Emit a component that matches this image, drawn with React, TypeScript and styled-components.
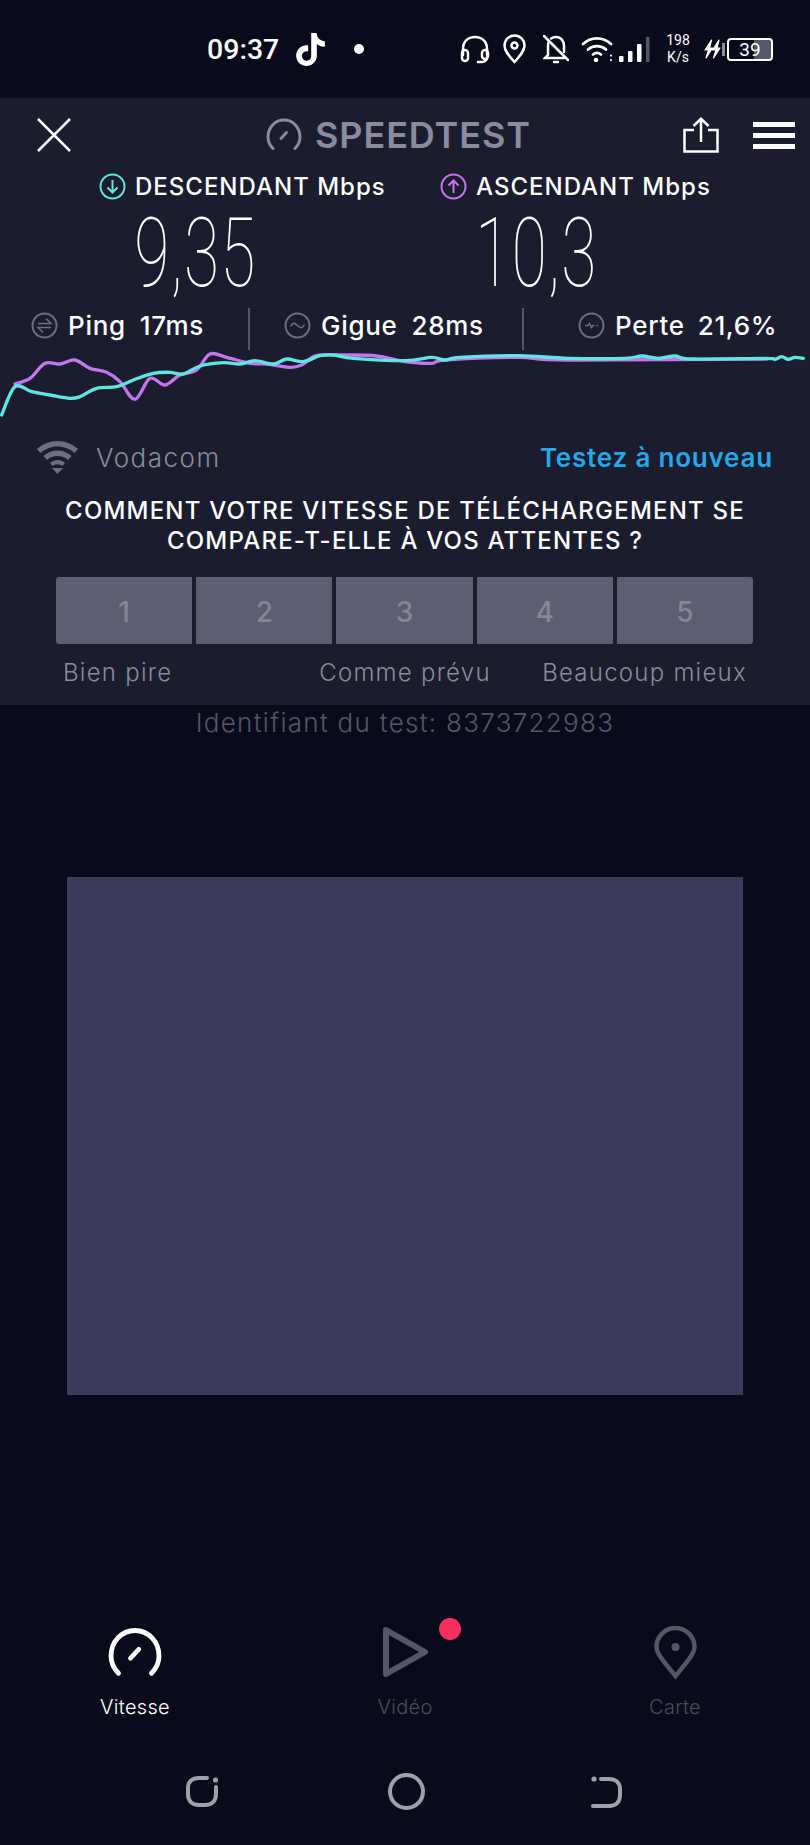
import styled, { createGlobalStyle } from 'styled-components'
import { SiTiktok } from 'react-icons/si'

const GlobalStyle = createGlobalStyle`
    html, body {
        margin: 0;
        padding: 0;
        background: #0a0b1a;
    }
    * {
        box-sizing: border-box;
    }
`

const Page = styled.div`
    width: 810px;
    height: 1845px;
    overflow: hidden;
    background: #0a0b1a;
    color: #fff;
    font-family: Inter, 'Open Sans', sans-serif;
`

const StatusBar = styled.div`
    height: 98px;
    padding: 0 37px 0 207px;
    display: flex;
    align-items: center;
    font-family: Roboto, sans-serif;
`
const Clock = styled.span`
    font-size: 28.5px;
    font-weight: 500;
    width: 76px;
`
const TikTokSlot = styled.span`
    margin-left: 11px;
    display: flex;
    font-size: 33px;
`
const StatusDot = styled.span`
    width: 10px;
    height: 10px;
    border-radius: 50%;
    background: #fff;
    margin-left: 27px;
`
const StatusIcons = styled.div`
    margin-left: auto;
    display: flex;
    align-items: center;
`
const StatusSlot = styled.span<{ $left: number }>`
    margin-left: ${(p) => p.$left}px;
    display: flex;
`
const NetSpeed = styled.span`
    margin-left: 16px;
    width: 24px;
    font-size: 14px;
    line-height: 17px;
    font-weight: 400;
    text-align: center;
`
const Battery = styled.span`
    width: 46px;
    height: 23px;
    margin-left: 2px;
    border: 2px solid #fff;
    border-radius: 4px;
    font-size: 19px;
    line-height: 19px;
    text-align: center;
    background: linear-gradient(90deg, transparent 60%, #55566a 60%);
`
const BatteryCap = styled.span`
    width: 3px;
    height: 13px;
    margin-left: 1px;
    background: #8d8e9c;
`

const Panel = styled.section`
    height: 607px;
    background: #1b1c2e;
`
const Toolbar = styled.div`
    height: 70px;
    padding: 4px 15px 0 37px;
    display: flex;
    align-items: center;
`
const Brand = styled.div`
    margin-left: 195px;
    display: flex;
    align-items: center;
    gap: 13px;
    color: #8a8b9e;
    font-size: 36px;
    font-weight: 600;
    letter-spacing: 0.9px;
`
const ToolbarActions = styled.div`
    margin-left: auto;
    display: flex;
    align-items: center;
    gap: 34px;
`
const Burger = styled.div`
    width: 42px;
    height: 27px;
    display: flex;
    flex-direction: column;
    justify-content: space-between;
    span {
        height: 5px;
        background: #fff;
    }
`

const SpeedLabels = styled.div`
    margin-top: 4px;
    height: 26px;
    padding-left: 99px;
    display: grid;
    grid-template-columns: 341px 1fr;
`
const SpeedLabel = styled.div`
    display: flex;
    align-items: center;
    gap: 9px;
    font-size: 24px;
    font-weight: 500;
    letter-spacing: 1px;
    white-space: nowrap;
`
const SpeedValues = styled.div`
    height: 110px;
    padding-left: 25px;
    display: grid;
    grid-template-columns: 341px 341px;
`
const SpeedValue = styled.div`
    text-align: center;
    font-family: Roboto, sans-serif;
    font-size: 97px;
    font-weight: 100;
    line-height: 110px;
    letter-spacing: 2px;
    transform: scaleX(0.66);
    white-space: nowrap;
`

const Stats = styled.div`
    height: 42px;
    padding-left: 31px;
    display: grid;
    grid-template-columns: 217px 274px 1fr;
`
const Stat = styled.div<{ $inset: number; $divided?: boolean }>`
    padding: 0 0 7px ${(p) => p.$inset}px;
    display: flex;
    align-items: center;
    font-size: 26px;
    font-weight: 500;
    letter-spacing: 0.7px;
    white-space: nowrap;
    border-left: ${(p) => (p.$divided ? '2px solid #55566a' : 'none')};
`
const StatName = styled.span<{ $gap: number }>`
    margin-left: 10px;
    margin-right: ${(p) => p.$gap}px;
`

const Chart = styled.svg`
    display: block;
    width: 810px;
    height: 70px;
`

const NetworkRow = styled.div`
    height: 76px;
    padding: 0 37px 2px;
    display: flex;
    align-items: center;
`
const Carrier = styled.span`
    margin-left: 18px;
    font-size: 26px;
    font-weight: 300;
    letter-spacing: 1.5px;
    color: #8a8b9e;
`
const Retry = styled.span`
    margin-left: auto;
    font-size: 26px;
    font-weight: 600;
    letter-spacing: 0.8px;
    color: #26a9e8;
`

const Question = styled.h2`
    margin: 0;
    text-align: center;
    font-size: 24px;
    line-height: 30px;
    font-weight: 500;
    letter-spacing: 1.2px;
`
const Ratings = styled.div`
    margin: 21px 57px 0 56px;
    height: 67px;
    display: grid;
    grid-template-columns: repeat(5, 1fr);
    gap: 4px;
`
const Rating = styled.div<{ $edge?: 'left' | 'right' }>`
    padding-top: 3px;
    background: #5d5e72;
    color: #85869a;
    display: flex;
    align-items: center;
    justify-content: center;
    font-size: 28px;
    font-weight: 500;
    border-radius: ${(p) =>
        p.$edge === 'left' ? '3px 0 0 3px' : p.$edge === 'right' ? '0 3px 3px 0' : '0'};
`
const Scale = styled.div`
    padding: 14px 63px 0;
    display: grid;
    grid-template-columns: 1fr auto 1fr;
    color: #8a8b9e;
    font-size: 24px;
    font-weight: 300;
    letter-spacing: 1.25px;
    white-space: nowrap;
`
const ScaleEnd = styled.span`
    justify-self: end;
`

const TestId = styled.div`
    height: 36px;
    text-align: center;
    line-height: 36px;
    font-size: 26px;
    font-weight: 300;
    letter-spacing: 1.3px;
    color: #55566a;
`
const AdSlot = styled.div`
    width: 676px;
    height: 518px;
    margin: 136px auto 0;
    background: #3b3a58;
`

const Tabs = styled.nav`
    padding-top: 231px;
    display: grid;
    grid-template-columns: 270px 270px 270px;
`
const Tab = styled.div<{ $active?: boolean }>`
    height: 93px;
    display: flex;
    flex-direction: column;
    align-items: center;
    justify-content: space-between;
    font-size: 20px;
    font-weight: 300;
    letter-spacing: 0.3px;
    color: ${(p) => (p.$active ? '#fff' : '#4a4b5e')};
`
const TabIcon = styled.div`
    position: relative;
    height: 58px;
    display: flex;
    align-items: flex-start;
`
const Badge = styled.span`
    position: absolute;
    top: -8px;
    left: 57px;
    width: 22px;
    height: 22px;
    border-radius: 50%;
    background: #f7315f;
`

const SystemNav = styled.div`
    margin-top: 54px;
    padding: 0 187px 0 185px;
    display: flex;
    align-items: center;
    justify-content: space-between;
`

const CloseIcon = () => (
    <svg width="34" height="34" viewBox="0 0 34 34" fill="none" stroke="#fff" strokeWidth="2.5">
        <path d="M1 1l32 32M33 1L1 33" />
    </svg>
)

const Gauge = ({ size, color, stroke }: { size: number; color: string; stroke: number }) => (
    <svg width={size} height={size} viewBox="0 0 36 36" fill="none" stroke={color} strokeWidth={stroke} strokeLinecap="round">
        <path d="M7 31.5C3.5 28 2 24 2 20 2 10.500 9 3 18 3s16 7.500 16 17c0 4-1.500 8-5 11.500" />
        <path d="M15 21.500l5.500-6" />
    </svg>
)

const ShareIcon = () => (
    <svg width="36" height="36" viewBox="0 0 36 36" fill="none" stroke="#fff" strokeWidth="2.5">
        <path d="M11 13H1.500v21.500h33V13H25" />
        <path d="M18 25V2M10.500 9L18 1.800 25.500 9" />
    </svg>
)

const RoundArrow = ({ color, up }: { color: string; up?: boolean }) => (
    <svg width="27" height="27" viewBox="0 0 27 27" fill="none" stroke={color} strokeWidth="2">
        <circle cx="13.500" cy="13.500" r="12" />
        <path d={up ? 'M13.500 20V7.500M8.500 12.500l5-5 5 5' : 'M13.500 7v12.500M8.500 14.500l5 5 5-5'} />
    </svg>
)

const StatIcon = ({ d }: { d: string }) => (
    <svg width="27" height="27" viewBox="0 0 27 27" fill="none" stroke="#6d6e82" strokeWidth="2">
        <circle cx="13.500" cy="13.500" r="12" />
        <path d={d} strokeWidth="1.600" />
    </svg>
)

const WifiMark = () => (
    <svg width="41" height="33" viewBox="0 0 41 33" fill="#6d6e82">
        <path d="M20.500 0C12.500 0 5.500 3 0 8l3.500 4C8 8 14 5.500 20.500 5.500S33 8 37.500 12l3.500-4C35.500 3 28.500 0 20.500 0z" />
        <path d="M20.500 9.500c-5.500 0-10.500 2-14 5.500l3.500 4c2.700-2.700 6.500-4 10.500-4s7.800 1.300 10.500 4l3.500-4c-3.500-3.500-8.500-5.500-14-5.500z" />
        <path d="M20.500 19c-3 0-5.500 1-7.500 3l2.700 3c1.200-1 3-1.700 4.800-1.700s3.600.7 4.800 1.700l2.700-3c-2-2-4.500-3-7.500-3z" />
        <path d="M15 27h11l-5.500 6z" />
    </svg>
)

const Headset = () => (
    <svg width="30" height="29" viewBox="0 0 30 29" fill="none" stroke="#fff" strokeWidth="2.500" strokeLinecap="round">
        <path d="M3 20V14C3 6.500 8 2 15 2s12 4.500 12 12v6" />
        <rect x="2" y="15" width="6" height="11" rx="3" />
        <rect x="22" y="15" width="6" height="9" rx="3" />
        <path d="M27 22c0 3-2 5-5 5h-4" />
    </svg>
)

const PinStatus = () => (
    <svg width="23" height="30" viewBox="0 0 23 30" fill="none" stroke="#fff" strokeWidth="2.500">
        <path d="M11.500 28C6 22 1.500 17 1.500 11.500a10 10 0 0 1 20 0C21.500 17 17 22 11.500 28z" />
        <circle cx="11.500" cy="11.500" r="3" />
    </svg>
)

const BellOff = () => (
    <svg width="26" height="29" viewBox="0 0 26 29" fill="none" stroke="#fff" strokeWidth="2.500" strokeLinecap="round">
        <path d="M1 1l24 24" />
        <path d="M6 6.500C5 8 5 9.500 5 11v9l-3 3h19" />
        <path d="M8 3.500C9.500 2.500 11 2 13 2c5 0 8 4 8 9v6" />
        <path d="M11 27h4" />
    </svg>
)

const WifiStatus = () => (
    <svg width="32" height="26" viewBox="0 0 32 26" fill="none" stroke="#fff" strokeWidth="2.800" strokeLinecap="round">
        <path d="M2 8c8-7.500 20-7.500 28 0" />
        <path d="M7 13.500c5-4.500 13-4.500 18 0" />
        <path d="M12 18.500c2.500-2 5.500-2 8 0" />
        <circle cx="15" cy="24" r="2.200" fill="#fff" stroke="none" />
        <path d="M30 19.500v.100M30 24v.100" strokeWidth="2.200" />
    </svg>
)

const SignalBars = () => (
    <svg width="32" height="25" viewBox="0 0 32 25" fill="#fff">
        <rect x="1" y="19" width="4.500" height="6" rx="1" />
        <rect x="10" y="14" width="4.500" height="11" rx="1" />
        <rect x="19" y="7" width="4.500" height="18" rx="1" />
        <rect x="28" y="0" width="3.500" height="25" fill="#55566a" />
    </svg>
)

const BoltPair = () => (
    <svg width="17" height="20" viewBox="0 0 17 20" fill="#fff" stroke="#fff" strokeWidth="1.2" strokeLinejoin="round">
        <path d="M7.500 1L1 11h3.500L2 19l6.500-10H5.500zM15 1L8.500 11H12L9.500 19 16 9h-3z" />
    </svg>
)

const PlayTab = () => (
    <svg width="47" height="52" viewBox="0 0 47 52" fill="none" stroke="#55566a" strokeWidth="6" strokeLinejoin="round">
        <path d="M4 4l39 22L4 48z" />
    </svg>
)

const PinTab = () => (
    <svg width="43" height="55" viewBox="0 0 43 55" fill="none" stroke="#55566a" strokeWidth="4.500">
        <path d="M21.500 50C11 37 2.500 28 2.500 21a19 19 0 0 1 38 0c0 7-8.500 16-19 29z" />
        <circle cx="21.500" cy="21" r="4" fill="#55566a" stroke="none" />
    </svg>
)

const RecentsKey = () => (
    <svg width="36" height="33" viewBox="0 0 36 33" fill="none" stroke="#a0a0a8" strokeWidth="4" strokeLinecap="round">
        <path d="M22 3h-8C7 3 3 7 3 13v6c0 7 4 11 11 11h6c7 0 11-4 11-11v-7" />
        <circle cx="30.500" cy="5" r="2.600" fill="#a0a0a8" stroke="none" />
    </svg>
)

const HomeKey = () => (
    <svg width="37" height="37" viewBox="0 0 37 37" fill="none" stroke="#a0a0a8" strokeWidth="4">
        <circle cx="18.500" cy="18.500" r="16.500" />
    </svg>
)

const BackKey = () => (
    <svg width="32" height="34" viewBox="0 0 32 34" fill="none" stroke="#a0a0a8" strokeWidth="4" strokeLinecap="round">
        <path d="M10 4h8c7 0 11 4 11 10v6c0 7-4 11-11 11H2" />
        <circle cx="3" cy="4" r="2.600" fill="#a0a0a8" stroke="none" />
    </svg>
)

// catmull-rom through the sampled points, so the graph has no hard corners
const toCurve = (pts: number[][]) => {
    let d = `M${pts[0][0]} ${pts[0][1]}`
    for (let i = 0; i < pts.length - 1; i++) {
        const a = pts[Math.max(i - 1, 0)]
        const b = pts[i]
        const c = pts[i + 1]
        const e = pts[Math.min(i + 2, pts.length - 1)]
        const c1 = [b[0] + (c[0] - a[0]) / 6, b[1] + (c[1] - a[1]) / 6]
        const c2 = [c[0] - (e[0] - b[0]) / 6, c[1] - (e[1] - b[1]) / 6]
        d += `C${c1[0]} ${c1[1]} ${c2[0]} ${c2[1]} ${c[0]} ${c[1]}`
    }
    return d
}

const downloadLine = [
    [5, 225], [45, 140], [95, 155], [150, 165], [210, 175], [240, 170], [290, 145], [350, 140],
    [400, 120], [460, 100], [510, 97], [550, 102], [600, 78], [670, 68], [720, 72], [765, 62],
    [820, 72], [860, 57], [910, 65], [960, 47], [1000, 45], [1060, 55], [1215, 62], [1295, 52],
    [1335, 60], [1380, 52], [1555, 47], [1705, 55], [1875, 55], [1925, 48], [1975, 55], [2025, 48],
    [2075, 57], [2295, 55], [2325, 58], [2345, 50], [2365, 58], [2385, 52], [2410, 55],
]
const uploadLine = [
    [45, 132], [90, 115], [135, 70], [180, 72], [225, 60], [270, 85], [320, 97], [360, 125],
    [405, 178], [450, 115], [495, 135], [540, 105], [590, 90], [630, 42], [680, 52], [750, 70],
    [800, 72], [870, 82], [905, 75], [950, 47], [1040, 45], [1130, 48], [1215, 65], [1295, 70],
    [1335, 60], [1555, 52], [1705, 60], [2300, 57],
]

export default function App() {
    return (
        <Page>
            <GlobalStyle />
            <StatusBar>
                <Clock>09:37</Clock>
                <TikTokSlot>
                    <SiTiktok />
                </TikTokSlot>
                <StatusDot />
                <StatusIcons>
                    <StatusSlot $left={0}><Headset /></StatusSlot>
                    <StatusSlot $left={13}><PinStatus /></StatusSlot>
                    <StatusSlot $left={17}><BellOff /></StatusSlot>
                    <StatusSlot $left={12}><WifiStatus /></StatusSlot>
                    <StatusSlot $left={5}><SignalBars /></StatusSlot>
                    <NetSpeed>198<br />K/s</NetSpeed>
                    <StatusSlot $left={14}><BoltPair /></StatusSlot>
                    <BatteryCap />
                    <Battery>39</Battery>
                </StatusIcons>
            </StatusBar>
            <Panel>
                <Toolbar>
                    <CloseIcon />
                    <Brand>
                        <Gauge size={36} color="#8a8b9e" stroke={3} />
                        SPEEDTEST
                    </Brand>
                    <ToolbarActions>
                        <ShareIcon />
                        <Burger>
                            <span />
                            <span />
                            <span />
                        </Burger>
                    </ToolbarActions>
                </Toolbar>
                <SpeedLabels>
                    <SpeedLabel>
                        <RoundArrow color="#5fe6e0" />
                        DESCENDANT Mbps
                    </SpeedLabel>
                    <SpeedLabel>
                        <RoundArrow color="#c277ee" up />
                        ASCENDANT Mbps
                    </SpeedLabel>
                </SpeedLabels>
                <SpeedValues>
                    <SpeedValue>9,35</SpeedValue>
                    <SpeedValue>10,3</SpeedValue>
                </SpeedValues>
                <Stats>
                    <Stat $inset={0}>
                        <StatIcon d="M7 11.500h13l-5-5M20 15.500H7l5 5" />
                        <StatName $gap={14}>Ping</StatName>17ms
                    </Stat>
                    <Stat $inset={34} $divided>
                        <StatIcon d="M6.500 14.500c2-4 4-4 7-1s5 3 7-1" />
                        <StatName $gap={14}>Gigue</StatName>28ms
                    </Stat>
                    <Stat $inset={54} $divided>
                        <StatIcon d="M7 13.500h3l1.500-2 2 4 1.500-2h1.500M18.500 13.500H20" />
                        <StatName $gap={13}>Perte</StatName>21,6%
                    </Stat>
                </Stats>
                <Chart viewBox="0 30 2430 210" fill="none" strokeWidth="10" strokeLinejoin="round" strokeLinecap="round">
                    <path d={toCurve(uploadLine)} stroke="#c277ee" />
                    <path d={toCurve(downloadLine)} stroke="#5fe6e0" />
                </Chart>
                <NetworkRow>
                    <WifiMark />
                    <Carrier>Vodacom</Carrier>
                    <Retry>Testez à nouveau</Retry>
                </NetworkRow>
                <Question>
                    COMMENT VOTRE VITESSE DE TÉLÉCHARGEMENT SE
                    <br />
                    COMPARE-T-ELLE À VOS ATTENTES ?
                </Question>
                <Ratings>
                    <Rating $edge="left">1</Rating>
                    <Rating>2</Rating>
                    <Rating>3</Rating>
                    <Rating>4</Rating>
                    <Rating $edge="right">5</Rating>
                </Ratings>
                <Scale>
                    <span>Bien pire</span>
                    <span>Comme prévu</span>
                    <ScaleEnd>Beaucoup mieux</ScaleEnd>
                </Scale>
            </Panel>
            <TestId>Identifiant du test: 8373722983</TestId>
            <AdSlot />
            <Tabs>
                <Tab $active>
                    <TabIcon>
                        <Gauge size={54} color="#fff" stroke={3.2} />
                    </TabIcon>
                    Vitesse
                </Tab>
                <Tab>
                    <TabIcon>
                        <PlayTab />
                        <Badge />
                    </TabIcon>
                    Vidéo
                </Tab>
                <Tab>
                    <TabIcon>
                        <PinTab />
                    </TabIcon>
                    Carte
                </Tab>
            </Tabs>
            <SystemNav>
                <RecentsKey />
                <HomeKey />
                <BackKey />
            </SystemNav>
        </Page>
    )
}
